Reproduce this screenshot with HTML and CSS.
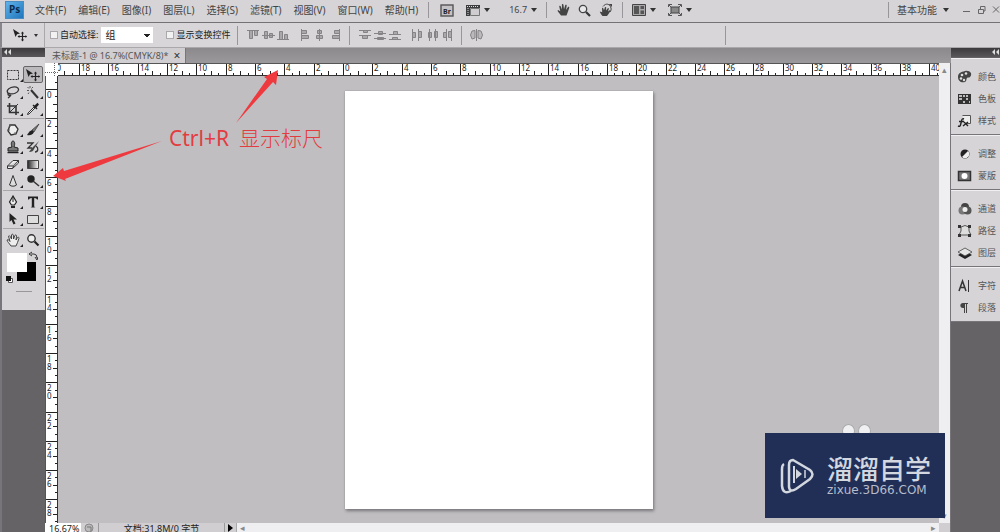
FILE: index.html
```html
<!DOCTYPE html>
<html lang="zh-CN">
<head>
<meta charset="utf-8">
<title>未标题-1</title>
<link rel="stylesheet" href="styles.css">
</head>
<body>
<div class="app">
  <header class="menubar">
    <svg class="logo" width="19" height="18" viewBox="0 0 19 18"><defs><linearGradient id="ps" x1="0" y1="0" x2="1" y2="1"><stop offset="0" stop-color="#62b4ea"/><stop offset="1" stop-color="#1d74bb"/></linearGradient></defs><rect x=".5" y=".5" width="18" height="17" fill="url(#ps)" stroke="#4a8cc4"/><text x="4" y="12" font-size="10" font-weight="700" fill="#0b2a4d">Ps</text></svg>
    <nav class="menus">
      <button>文件(F)</button><button>编辑(E)</button><button>图像(I)</button><button>图层(L)</button><button>选择(S)</button><button>滤镜(T)</button><button>视图(V)</button><button>窗口(W)</button><button>帮助(H)</button>
    </nav>
    <span class="sep"></span>
    <div class="quick">
      <button aria-label="Bridge"><svg width="14" height="13" viewBox="0 0 14 13"><rect x="1" y="1" width="12" height="11" fill="#c4c2c5" stroke="#555" stroke-width="1.4"/><text x="3" y="9.500" font-size="7" font-weight="700" fill="#222">Br</text></svg></button>
      <button class="film" aria-label="查看额外内容"><svg width="14" height="13" viewBox="0 0 14 13"><path d="M0 1h14v3H0zM0 4h4v8H0z" fill="#3d3d3f"/><path d="M1 2.500h12M2 4v8" stroke="#ddd" stroke-dasharray="1 1"/><path d="M4.500 4.500h9v7h-9z" fill="#cfcdd0" stroke="#777"/></svg><i class="caret"></i></button>
      <button class="level">16.7<i class="caret"></i></button>
    </div>
    <span class="sep"></span>
    <div class="views">
      <button aria-label="抓手"><svg width="13" height="14" viewBox="0 0 13 14"><path d="M4 12.500C2.500 10.500 1 9 .5 7.500c.8-.8 2 0 2.800 1L2.200 3.200c.8-.8 1.400-.2 1.700.6L5 6.500 4.900 1.500c.6-.8 1.500-.5 1.600.4L7 6.200 8.300 2c.8-.6 1.500 0 1.400.8L9 7l2-3c.9-.5 1.500.2 1.200 1L10.800 9l-1.300 3.500z" fill="#444"/></svg></button>
      <button aria-label="缩放"><svg width="13" height="13" viewBox="0 0 13 13"><circle cx="5" cy="5" r="3.700" fill="#e8e7e9" stroke="#444" stroke-width="1.300"/><path d="M8 8l4 4" stroke="#333" stroke-width="2.200"/></svg></button>
      <button aria-label="旋转视图"><svg width="14" height="14" viewBox="0 0 14 14"><path d="M3.500 13C2 11 1 10 .8 8.500l2.400.8L3 5l1-.2L5 7.200 6 4l1.200.2L7 7.500l2-2.600 1 .6L9 8.500 11 7l.5 1-2 3-1.500 2z" fill="#444"/><path d="M4 3.500C7-.5 11 1 12 5c.3 1.400 0 3-1 4" fill="none" stroke="#444"/><path d="M9.500 1h3.500v3z" fill="#444"/></svg></button>
    </div>
    <span class="sep"></span>
    <div class="layouts">
      <button aria-label="排列文档"><svg width="14" height="12" viewBox="0 0 14 12"><path d="M.5.5h13v11H.5z" fill="#aaa8ab" stroke="#444"/><path d="M2 2h5v8H2zM8.500 2H12v3H8.500zM8.500 6.500H12V10H8.500z" fill="#555"/></svg><i class="caret"></i></button>
      <button aria-label="屏幕模式"><svg width="14" height="12" viewBox="0 0 14 12"><path d="M3 3h8v6H3z" fill="#888" stroke="#444"/><path d="M.5 3V.5H4M10 .5h3.500V3M13.500 9v2.500H10M4 11.500H.5V9M1 1l2 2M13 1l-2 2M13 11l-2-2M1 11l2-2" fill="none" stroke="#555"/></svg><i class="caret"></i></button>
    </div>
    <div class="workspace"><span class="sep"></span><button>基本功能<i class="caret"></i></button>
      <svg width="37" height="11" viewBox="0 0 37 11" fill="none" stroke="#666"><path d="M0 6.500h7M15.500 4.500h5v4h-5zM17.500 4V1.500h4.500v4.500h-1M30 1.500l6 6M36 1.500l-6 6"/></svg></div>
  </header>

  <section class="options">
    <button class="current" aria-label="移动工具"><svg width="14" height="14" viewBox="0 0 14 14"><use href="#move"/></svg><i class="caret"></i></button>
    <label class="check"><input type="checkbox">自动选择:</label>
    <select class="kind" aria-label="自动选择"><option>组</option></select>
    <label class="check second"><input type="checkbox">显示变换控件</label>
    <span class="sep"></span>
    <svg class="align" width="94" height="12" viewBox="0 0 94 12" fill="#aaa8ab" stroke="#858386"><path d="M0 1.500h12M2.500 1.500h3v8h-3zM7.500 1.500h3v5h-3zM15 6.500h13M17.500 2.500h3v7h-3zM22.500 4.500h3v4h-3zM30 10.500h12M32.500 2.500h3v8h-3zM37.500 5.500h3v5h-3zM54.500 0v12M54.500 1.500h5v3h-5zM54.500 6.500h7v3h-7zM72.500 0v12M70.500 1.500h4v3h-4zM69.500 6.500h6v3h-6zM92.500 0v12M87.500 1.500h5v3h-5zM85.500 6.500h7v3h-7z"/></svg>
    <span class="sep"></span>
    <svg class="align" width="94" height="12" viewBox="0 0 94 12" fill="#aaa8ab" stroke="#858386"><path d="M0 1.500h12M0 6.500h12M4.500 1.500h4v2h-4zM3.500 6.500h5v3h-5zM15 4.500h12M15 9.500h12M19.500 2.500h4v3h-4zM18.500 8.500h6v2h-6zM30 5.500h12M30 10.500h12M34.500 2.500h4v3h-4zM33.500 8.500h5v2h-5zM53.500 0v12M59.500 0v12M53.500 3.500h3v5h-3zM59.500 2.500h3v6h-3zM70.500 0v12M76.500 0v12M69.500 3.500h3v5h-3zM75.500 2.500h3v6h-3zM87.500 0v12M92.500 0v12M84.500 3.500h3v5h-3zM89.500 2.500h3v6h-3z"/></svg>
    <span class="sep"></span>
    <svg class="auto" width="13" height="12" viewBox="0 0 13 12" fill="#bbb9bc" stroke="#858386"><path d="M5 1.500L2 2 .5 6 2 10l3-1zM8 1.500l3 .5 1.500 4L11 10 8 9zM6.500 0v12"/></svg>
    <span class="sep end"></span>
  </section>

  <main class="work">
    <aside class="toolbox">
      <div class="cap"><svg width="8" height="6" viewBox="0 0 8 6" fill="#ddd"><path d="M3 0v6L0 3zM7 0v6L4 3z"/></svg></div>
      <div class="tools">
        <div class="set">
          <button aria-label="选框"><svg width="14" height="14" viewBox="0 0 14 14"><path d="M1.500 2.500h11v9h-11z" fill="none" stroke="#333" stroke-dasharray="2 1"/></svg></button>
          <button class="on" aria-label="移动"><svg width="14" height="14" viewBox="0 0 14 14"><g id="move"><path d="M0 1l7 4.500-3 .7L2.500 9z" fill="#222"/><path d="M9.500 4.500v8M5.500 8.500h8" stroke="#222" stroke-width="1.200"/><path d="M9.500 3.500L8 5.500h3zM9.500 13.500L8 11.500h3zM4.500 8.500l2-1.500v3zM14 8.500L12.500 7v3z" fill="#222"/></g></svg></button>
          <button aria-label="套索"><svg width="14" height="14" viewBox="0 0 14 14"><path d="M3 9C0 7 1 4 5 2.500s8-.5 7.500 2.500S7 9.500 3.500 8.500C1 8 2 11 4 10.200S3.500 12 2 13" fill="none" stroke="#333" stroke-width="1.300"/></svg></button>
          <button aria-label="魔棒"><svg width="14" height="14" viewBox="0 0 14 14"><path d="M5 5l7 8" stroke="#333" stroke-width="2"/><path d="M1 5.500h2M4 1v2M1.500 2l1.500 1.500M7 2L5.500 3.500M2 9l1-1.500" stroke="#555"/></svg></button>
          <button aria-label="裁剪"><svg width="14" height="14" viewBox="0 0 14 14"><path d="M3.500 1v9.500H13M1 4h9v9" fill="none" stroke="#333" stroke-width="1.600"/><path d="M3 11L12 2" stroke="#333"/></svg></button>
          <button aria-label="吸管"><svg width="14" height="14" viewBox="0 0 14 14"><path d="M8 5l1 1-6 6-1.500.5L2 11z" fill="#eee" stroke="#333"/><path d="M6.500 3.500l4 4 1-1L10.500 5.500l2.500-3L11.500.8 8.500 3.500l-1-1z" fill="#222"/></svg></button>
        </div>
        <div class="set">
          <button aria-label="修补"><svg width="14" height="14" viewBox="0 0 14 14"><path d="M4 2l5 0 3 4-2 5-5 1L2 8z" fill="#eee" stroke="#333" stroke-width="1.300"/><path d="M4 1v3M1 7h3M9 12V9" stroke="#666"/></svg></button>
          <button aria-label="画笔"><svg width="14" height="14" viewBox="0 0 14 14"><path d="M13 1L6 7l2 2z" fill="#777" stroke="#333" stroke-width=".7"/><path d="M6 7L3.500 8.500 1 12c3 .7 5.500 0 7-3z" fill="#222"/></svg></button>
          <button aria-label="图章"><svg width="14" height="14" viewBox="0 0 14 14"><path d="M6 7C3-1 11-1 8 7l4 1v3H2V8z" fill="#777" stroke="#222"/><path d="M1.500 12.500h11" stroke="#222" stroke-width="1.500"/></svg></button>
          <button aria-label="历史画笔"><svg width="14" height="14" viewBox="0 0 14 14"><path d="M13 1L6 8 3 12c3 0 4.500-1 5-3z" fill="#444"/><path d="M1 3h6l-5 5h4M10 6c3 2 2 6-1 6" fill="none" stroke="#333" stroke-width="1.300"/></svg></button>
          <button aria-label="橡皮擦"><svg width="14" height="14" viewBox="0 0 14 14"><path d="M1.500 9L7 3.500h5.500L7.500 9zM1.500 9v2.500h5L12.500 6V3.500M7.500 9L6.500 11.500" fill="#eee" stroke="#333"/></svg></button>
          <button aria-label="渐变"><svg width="14" height="14" viewBox="0 0 14 14"><defs><linearGradient id="gr"><stop offset="0" stop-color="#222"/><stop offset="1" stop-color="#fff"/></linearGradient></defs><path d="M1.500 3.500h11v8h-11z" fill="url(#gr)" stroke="#444"/></svg></button>
          <button aria-label="锐化"><svg width="14" height="14" viewBox="0 0 14 14"><path d="M7 1.500L3.500 11c1.500 1.600 5.500 1.600 7 0z" fill="#ddd" stroke="#333"/></svg></button>
          <button aria-label="加深"><svg width="14" height="14" viewBox="0 0 14 14"><circle cx="5" cy="5" r="3.700" fill="#222"/><path d="M7 7l6 5" stroke="#333" stroke-width="1.500"/></svg></button>
        </div>
        <div class="set">
          <button aria-label="钢笔"><svg width="14" height="14" viewBox="0 0 14 14"><path d="M7 1L3.500 7l2 3h3l2-3z" fill="#eee" stroke="#222" stroke-width="1.200"/><path d="M7 2v5" stroke="#222"/><path d="M5 11h4v2H5z" fill="#222"/></svg></button>
          <button aria-label="文字"><svg width="14" height="14" viewBox="0 0 14 14"><path d="M2 1.500h10v3h-1Q11 3 8.200 3v8q0 1.500 1.500 1.500H4.300Q5.800 12.500 5.800 11V3Q3 3 3 4.500H2z" fill="#222"/></svg></button>
          <button aria-label="路径选择"><svg width="14" height="14" viewBox="0 0 14 14"><path d="M3.500 1v9l2-2 2 4.500 2-1-2-4H11z" fill="#222"/></svg></button>
          <button aria-label="矩形"><svg width="14" height="14" viewBox="0 0 14 14"><path d="M1.500 3.500h11v8h-11z" fill="#ddd" stroke="#444"/></svg></button>
        </div>
        <div class="set">
          <button aria-label="抓手"><svg width="14" height="14" viewBox="0 0 14 14"><path d="M5 13C3 10 1.500 9 1 7c1-.8 2 0 3 1.500L2.500 3.200c.8-1 1.500-.2 2 .8l1 2V1.800c.6-1 1.500-.7 1.800.2l.3 4L9 2.300c.8-.8 1.600-.2 1.500.8L10 7l1.600-2.600c.9-.6 1.700.2 1.300 1.200L11.500 9.500 10 13z" fill="#eee" stroke="#333" stroke-width=".9"/></svg></button>
          <button class="plain" aria-label="缩放"><svg width="14" height="14" viewBox="0 0 14 14"><circle cx="5.500" cy="5.500" r="3.700" fill="#eee" stroke="#333" stroke-width="1.400"/><path d="M8.500 8.500l4 4" stroke="#222" stroke-width="2.200"/></svg></button>
        </div>
        <svg class="swatches" width="33" height="45" viewBox="0 0 33 45"><path d="M12 13h19v19H12z" fill="#000"/><path d="M2 4h20v19H2z" fill="#fff"/><path d="M26 5h3q3 0 3 4M27 3l-3 2 3 2M30 8l2 3 1-3" fill="none" stroke="#333"/><path d="M3.500 29.500h4v4h-4z" fill="#fff" stroke="#555"/><path d="M1 27h5v5H1z" fill="#111"/><path d="M11 42.500h16" stroke="#99979a"/></svg>
      </div>
    </aside>

    <section class="document">
      <div class="tabs"><div class="tab">未标题-1 @ 16.7%(CMYK/8)* <button aria-label="关闭">×</button></div></div>
      <div class="pane">
        <svg class="corner" width="13" height="13" viewBox="0 0 13 13"><path d="M0 9.500h13M9.500 0v13" stroke="#666" stroke-dasharray="1 1"/></svg>
        <svg class="ruler across" id="across"></svg>
        <div class="vscroll"><i>▴</i><i>▾</i></div>
        <svg class="ruler down" id="down"></svg>
        <div class="canvas" id="canvas"><div class="paper" id="paper"></div></div>
      </div>
      <footer class="status">
        <span class="percent">16.67%</span>
        <span class="proof"><svg width="10" height="10" viewBox="0 0 10 10"><circle cx="5" cy="5" r="4" fill="#bbb" stroke="#888"/><path d="M3 4h4v4" fill="none" stroke="#777"/></svg></span>
        <span class="info">文档:31.8M/0 字节</span>
        <button aria-label="状态"><svg width="5" height="8" viewBox="0 0 5 8"><path d="M0 0l5 4-5 4z"/></svg></button>
        <span class="hscroll"><i>◂</i><i>▸</i></span>
      </footer>
    </section>

    <aside class="dock">
      <div class="cap"><svg width="8" height="6" viewBox="0 0 8 6" fill="#ddd"><path d="M3 0v6L0 3zM7 0v6L4 3z"/></svg></div>
      <div class="group">
        <button><svg viewBox="0 0 16 16"><path d="M8 2c5-1 8 3 5 6-1 1-2 0-3 1s0 3-2 4c-4 1-7-1-7-5s3-5 7-6z" fill="#444"/><g fill="#ddd"><circle cx="5" cy="6" r="1.300"/><circle cx="9" cy="4.500" r="1.300"/><circle cx="4" cy="9.500" r="1.300"/><circle cx="7" cy="11" r="1.200"/></g></svg>颜色</button>
        <button><svg viewBox="0 0 16 16"><path d="M1 3h13v10H1z" fill="#333"/><path d="M2 4h3v2H2zM6 4h2v2H6zM9 4h2v2H9zM2 7h3v2H2zM9 7h2v2H9zM6 10h2v2H6zM12 10h1v2h-1z" fill="#bbb"/></svg>色板</button>
        <button><svg viewBox="0 0 16 16"><path d="M5.500 2.500h8v8h-5" fill="#eee" stroke="#555"/><path d="M7 6Q5 5 4.500 8l-1 4Q3 14 1 13M2 8.500h5M7 9l4 4M11 9l-5 4" fill="none" stroke="#222" stroke-width="1.400"/></svg>样式</button>
      </div>
      <div class="group">
        <button><svg viewBox="0 0 16 16"><circle cx="8" cy="8" r="4.500" fill="#222"/><path d="M11 5L5 11a4.200 4.200 0 0 0 6-6z" fill="#eee"/></svg>调整</button>
        <button><svg viewBox="0 0 16 16"><path d="M1.500 3.500h12v9h-12z" fill="#777" stroke="#333" stroke-width="1.500"/><circle cx="7.500" cy="8" r="3" fill="#fff"/></svg>蒙版</button>
      </div>
      <div class="group">
        <button><svg viewBox="0 0 16 16"><circle cx="8" cy="6" r="4" fill="#444"/><circle cx="5.500" cy="9.500" r="4" fill="#777"/><circle cx="10.500" cy="9.500" r="4" fill="#555"/><circle cx="8" cy="8.500" r="2.500" fill="#eee"/></svg>通道</button>
        <button><svg viewBox="0 0 16 16"><path d="M4 4Q8 1 12 4 11 8 14 12H2Q5 8 4 4z" fill="#ddd" stroke="#555"/><path d="M1 2h3v3H1zM11 2h3v3h-3zM1 11h3v3H1zM11 11h3v3h-3z" fill="#333"/></svg>路径</button>
        <button><svg viewBox="0 0 16 16"><path d="M1 10l7 4 7-4-7-4z" fill="#222"/><path d="M1 7l7 4 7-4-7-4z" fill="#e5e5e5" stroke="#444" stroke-width=".8"/></svg>图层</button>
      </div>
      <div class="group">
        <button><svg viewBox="0 0 16 16"><path d="M2 13L5.500 3 9 13M3.500 9.500h4" fill="none" stroke="#333" stroke-width="1.500"/><path d="M11.500 2v12" stroke="#333"/></svg>字符</button>
        <button><svg viewBox="0 0 16 16"><path d="M11 3H6C2.500 3 2.500 8 6 8h1v5h1V4h1v9h1V4h1z" fill="#444"/></svg>段落</button>
      </div>
    </aside>
  </main>

  <svg class="arrows" width="290" height="190" viewBox="0 0 290 190" fill="#ee3a3e"><path d="M236 123L267 79 264 77 278 70 276 85 273 82z"/><path d="M162 141L65 179 66 181 53 176 63 168 64 171z"/></svg>
  <p class="note"><span>Ctrl+R</span><span class="han">显示标尺</span></p>
  <div class="ears"><i></i><i></i></div>
  <div class="brand">
    <svg width="36" height="37" viewBox="0 0 36 37" fill="none" stroke="#d3d7e0"><path d="M13 3L30 13q5 4 0 9L16 32q-6 4-7-2V8q0-5 4-5z" stroke-width="2.500"/><path d="M4 7Q2 8 2 12v17q1 9 9 5" stroke-width="2.500"/><path d="M14 9v17" stroke-width="2"/><path d="M16 12v10l6-5z" fill="#d3d7e0" stroke="none"/><path d="M25 13v8" stroke-width="1.500"/></svg>
    <div><strong>溜溜自学</strong><span>zixue.3D66.COM</span></div>
  </div>
</div>
<script src="rulers.js"></script>
</body>
</html>
```

FILE: styles.css
```css
* { box-sizing: border-box; }
body { margin: 0; background: #666467; color: #333; font: 10px/14px "Noto Sans", "Noto Sans CJK SC", sans-serif; }
button { border: 0; padding: 0; margin: 0; background: none; color: inherit; font: inherit; display: flex; align-items: center; white-space: nowrap; }
svg { display: block; flex: none; }
i { font-style: normal; }
.app { position: relative; height: 100vh; overflow: hidden; display: flex; flex-direction: column; }
.caret { width: 0; height: 0; border: 3px solid transparent; border-top: 4px solid #333; border-bottom: 0; margin-left: 4px; }
.sep { width: 1px; height: 16px; background: #98969a; flex: none; }

.menubar { flex: 0 0 23px; display: flex; align-items: center; background: #d6d4d7; border-bottom: 1px solid #747276; padding: 0 0 2px 5px; color: #444; }
.menus { display: flex; gap: 12px; margin: 0 10px 0 11px; }
.quick { display: flex; gap: 12px; margin: 0 9px 0 11px; }
.level { margin-left: 7px; font-size: 9px; }
.views { display: flex; gap: 8px; margin: 0 9px 0 10px; }
.layouts { display: flex; gap: 12px; margin-left: 9px; }
.workspace { display: flex; align-items: center; margin-left: auto; }
.workspace button { margin: 0 14px 0 8px; }
.workspace .caret { margin-left: 6px; }

.options { flex: 0 0 25px; display: flex; align-items: center; background: #d8d6d9; border-left: 2px solid #88868a; border-bottom: 1px solid #aaa8ab; font-size: 9px; color: #222; }
.options .sep { height: 19px; }
.current { height: 24px; width: 43px; padding-left: 11px; border-right: 1px solid #aaa; }
.current .caret { margin-left: 7px; border-width: 3px 2px 0; }
.check { display: flex; align-items: center; gap: 2px; margin-left: 5px; white-space: nowrap; }
.check input { appearance: none; width: 8px; height: 8px; margin: 0; background: #f3f2f3; border: 1px solid #aaa8ab; }
.kind { appearance: none; width: 52px; height: 16px; margin-left: 3px; padding: 0 4px; border: 0; font: 10px/16px "Noto Sans", "Noto Sans CJK SC", sans-serif; color: #222; background: linear-gradient(#222, #222) 43px 7px / 6px 1px no-repeat, linear-gradient(#222, #222) 44px 8px / 4px 1px no-repeat, linear-gradient(#222, #222) 45px 9px / 2px 1px no-repeat, #fff; }
.second { margin: 0 7px 0 13px; }
.align { margin: 0 8px 0 9px; }
.auto { margin-left: 8px; }
.options .end { margin-left: auto; margin-right: 274px; }

.work { flex: 1; min-height: 0; display: flex; }
.cap { height: 9px; background: linear-gradient(#3c3a3d, #59575a); padding: 1px 2px; }
.toolbox { flex: none; width: 45px; border-left: 2px solid #77757a; background: #656366; }
.tools { background: #d6d4d7; padding: 9px 1px 0; height: 253px; }
.set { display: grid; grid-template-columns: repeat(2, 20px); grid-auto-rows: 17px; padding-bottom: 1px; margin-bottom: 2px; border-bottom: 1px solid #a9a7aa; }
.set:nth-child(4) { border-bottom: 0; margin-bottom: 0; padding: 0; }
.set button { position: relative; justify-content: center; }
.set button::after { content: ""; position: absolute; right: 0; bottom: 1px; border-left: 3px solid transparent; border-bottom: 3px solid #222; }
.set .on { border: 1px solid #666; border-radius: 2px; background: #bbb9bc; }
.set .on::after, .set .plain::after { display: none; }
.swatches { margin: 1px 0 0 2px; }

.document { flex: 1; min-width: 0; display: flex; flex-direction: column; }
.tabs { flex: 0 0 15px; background: linear-gradient(#8b898c, #9b999c); display: flex; }
.tab { display: flex; align-items: center; gap: 5px; padding: 0 5px 0 7px; height: 15px; font-size: 9px; color: #555; background: #d0ced1; border-right: 1px solid #77757a; white-space: nowrap; }
.tab button { font-size: 12px; color: #333; }
.pane { flex: 1; min-height: 0; display: grid; grid-template: 13px minmax(0, 1fr) / 13px minmax(0, 1fr) 12px; }
.corner { background: #fff; }
.ruler { width: 100%; height: 100%; background: #fff; overflow: hidden; }
.across { border-top: 1px solid #555; border-bottom: 1px solid #333; }
.down { grid-column: 1; grid-row: 2; border-left: 1px solid #555; border-right: 1px solid #333; }
.ruler path { stroke: #222; fill: none; shape-rendering: crispEdges; }
.ruler text { font-size: 8px; fill: #222; }
.vscroll { grid-column: 3; grid-row: 1 / 3; background: #efeef0; border-right: 1px solid #77757a; display: flex; flex-direction: column; justify-content: space-between; align-items: center; color: #888; font-size: 9px; }
.canvas { grid-column: 2; grid-row: 2; background: #c0bec1; display: flex; align-items: center; justify-content: center; }
.paper { height: 418px; aspect-ratio: 308 / 418; background: #fff; box-shadow: 0 0 1px #88868a, 1px 2px 3px #77757a; }
.status { flex: 0 0 9px; overflow: hidden; display: flex; align-items: flex-start; background: #d0ced1; font-size: 9px; line-height: 12px; color: #222; border-right: 1px solid #77757a; }
.percent { width: 36px; padding-left: 4px; background: #fff; }
.proof { width: 18px; padding-left: 3px; border-right: 1px solid #999; }
.info { width: 126px; text-align: center; border-right: 1px solid #999; }
.status button { width: 11px; height: 9px; padding-left: 3px; }
.hscroll { flex: 1; display: flex; justify-content: space-between; margin-right: 11px; padding: 0 3px; background: #efeef0; color: #888; border-left: 1px solid #aaa; line-height: 10px; }

.dock { flex: none; width: 49px; background: #656366; }
.dock .cap { display: flex; justify-content: flex-end; padding-right: 0; }
.group { background: #d6d4d7; border-top: 1px solid #f0eff1; border-bottom: 1px solid #77757a; padding: 7px 0 2px 6px; }
.group:nth-child(2) { margin-top: 1px; }
.group button { height: 22px; gap: 5px; font-size: 9px; color: #555; }
.group svg { width: 16px; height: 16px; }

.arrows { position: absolute; left: 0; top: 0; }
.note { position: absolute; left: 169px; top: 124px; margin: 0; display: flex; gap: 10px; font-size: 21px; line-height: 28px; color: #e33c40; white-space: nowrap; }
.note .han { font-weight: 300; }
.ears { position: absolute; right: 129px; bottom: 94px; display: flex; gap: 3px; }
.ears i { width: 13px; height: 14px; border-radius: 50%; background: #f0eff1; border: 1px solid #aaa; }
.brand { position: absolute; right: 55px; bottom: 14px; width: 180px; height: 85px; background: #212f56; display: flex; align-items: center; gap: 11px; padding-left: 15px; color: #d3d7e0; }
.brand strong { display: block; font-size: 26px; line-height: 28px; font-weight: 500; }
.brand span { display: block; font: 12px/14px "DejaVu Sans", sans-serif; color: #b6bccb; }
```

FILE: rulers.js
```js
// Draws both rulers so that zero sits on the paper's top-left corner.
const SVG = "http://www.w3.org/2000/svg";
const STEP = 29.32; // pixels for two ruler units
const THICK = 13;

function drawRuler(id, length, origin, vertical) {
  const svg = document.getElementById(id);
  svg.replaceChildren();
  let d = "";
  const first = -Math.ceil(origin / STEP) * 4;
  const last = Math.floor((length - origin) / STEP) * 4 + 3;
  for (let q = first; q <= last; q++) {
    const at = Math.floor(origin + q * STEP / 4) - 0.5;
    const size = q % 4 === 0 ? THICK : q % 2 === 0 ? 5 : 3;
    const from = THICK - 1 - size;
    d += vertical ? `M${from} ${at}H${THICK}` : `M${at} ${from}V${THICK}`;
    if (q % 4 === 0 && !(vertical && at < 0)) {
      const label = String(Math.abs(q / 2));
      const parts = vertical ? [...label] : [label];
      parts.forEach((part, i) => {
        const text = document.createElementNS(SVG, "text");
        text.setAttribute("x", vertical ? 1 : at + 1.5);
        text.setAttribute("y", vertical ? at + 8 + i * 8 : 7);
        text.textContent = part;
        svg.append(text);
      });
    }
  }
  const path = document.createElementNS(SVG, "path");
  path.setAttribute("d", d);
  svg.append(path);
}

function drawRulers() {
  const canvas = document.getElementById("canvas").getBoundingClientRect();
  const paper = document.getElementById("paper").getBoundingClientRect();
  drawRuler("across", canvas.width, paper.left - canvas.left, false);
  drawRuler("down", canvas.height, paper.top - canvas.top, true);
}

drawRulers();
window.addEventListener("resize", drawRulers);
```
